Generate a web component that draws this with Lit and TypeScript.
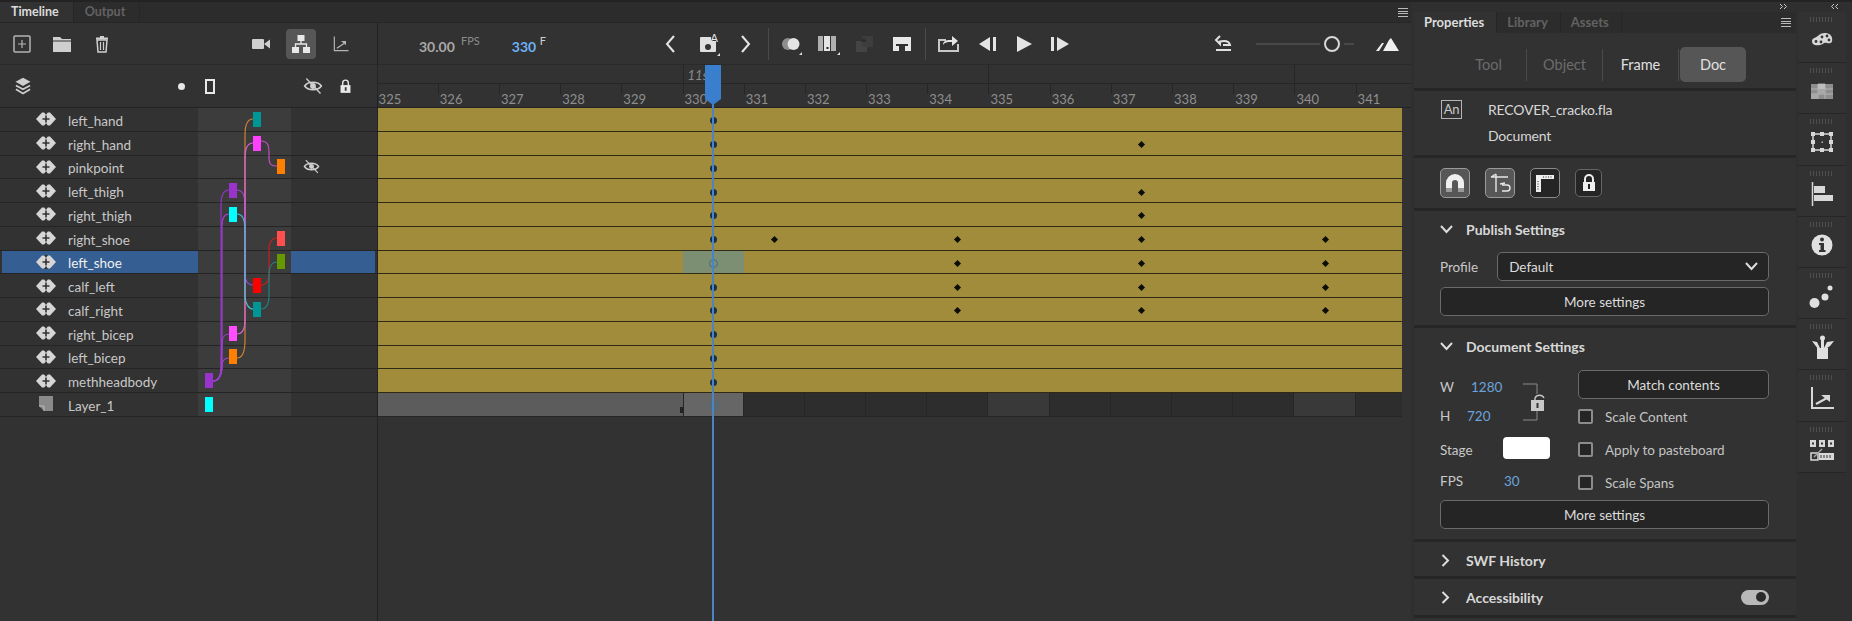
import { LitElement, html, css, svg } from 'lit';
import { customElement } from 'lit/decorators.js';

interface Layer {
  name: string;
  depth: number;
  color: string;
  keys: number[];
}

const FRAME_COUNT = 17;
const FIRST_FRAME = 325;

const layers: Layer[] = [
  { name: 'left_hand', depth: 2, color: '#009696', keys: [] },
  { name: 'right_hand', depth: 2, color: '#ff40ff', keys: [337] },
  { name: 'pinkpoint', depth: 3, color: '#ff8000', keys: [] },
  { name: 'left_thigh', depth: 1, color: '#9933cc', keys: [337] },
  { name: 'right_thigh', depth: 1, color: '#00ffff', keys: [337] },
  { name: 'right_shoe', depth: 3, color: '#ff4f4f', keys: [331, 334, 337, 340] },
  { name: 'left_shoe', depth: 3, color: '#669900', keys: [334, 337, 340] },
  { name: 'calf_left', depth: 2, color: '#ff0000', keys: [334, 337, 340] },
  { name: 'calf_right', depth: 2, color: '#009696', keys: [334, 337, 340] },
  { name: 'right_bicep', depth: 1, color: '#ff4dff', keys: [] },
  { name: 'left_bicep', depth: 1, color: '#ff8000', keys: [] },
  { name: 'methheadbody', depth: 0, color: '#9933cc', keys: [] },
  { name: 'Layer_1', depth: 0, color: '#00ffff', keys: [] },
];

const links = [
  ['M253 119C247 119 245 125 245 135L245 340C245 352 243 358 237 358', '#d08030'],
  ['M237 190C243 190 245 196 245 205L245 275C245 282 249 285 253 285', '#a040d0'],
  ['M253 143C247 143 245 149 245 158L245 320C245 328 243 334 237 334', '#e060e0'],
  ['M261 141C268 141 269 146 269 152L269 158C269 165 272 166 277 166', '#c050c0'],
  ['M229 190C223 190 221 196 221 205L221 365C221 376 219 381 213 381', '#9933cc'],
  ['M229 214C225 214 222 218 222 226L222 365C222 376 219 381 213 381', '#a040d0'],
  ['M237 214C243 214 245 220 245 230L245 295C245 304 249 309 253 309', '#40c0d8'],
  ['M229 334C224 334 222 337 222 345L221 370C221 376 218 381 213 381', '#a040d0'],
  ['M229 358C224 358 222 361 222 366C222 376 218 381 213 381', '#a040d0'],
  ['M261 285C267 285 269 281 269 273L269 250C269 242 272 238 277 238', '#c02020'],
  ['M261 309C267 309 269 304 269 295L269 275C269 266 272 262 277 262', '#208080'],
];

const L = '#cfcfcf';

// every toolbar icon is drawn on a 24x24 box
const icons: Record<string, unknown> = {
  add: svg`<rect x="4" y="4" width="16" height="16" rx="1" fill="none" stroke="#b4b4b4" stroke-width="1.5"/><path d="M12 8v8M8 12h8" stroke="#b4b4b4" stroke-width="1.2"/>`,
  folder: svg`<path d="M3 5h7l2 2h9v13H3z" fill="${L}"/><path d="M3 9h18" stroke="#323232"/>`,
  trash: svg`<path d="M6 6.5h12M10 5h4" stroke="${L}" stroke-width="2"/><path d="M7 8h10l-1 12H8z" fill="none" stroke="${L}" stroke-width="1.5"/><path d="M10.5 10v8M13.5 10v8" stroke="${L}" stroke-width="1.2"/>`,
  camera: svg`<rect x="3" y="7" width="12" height="10" rx="1" fill="${L}"/><path d="M15 12l6-4.5v9z" fill="${L}"/>`,
  parent: svg`<rect x="8.5" y="3" width="7" height="6" fill="#e8e8e8"/><rect x="3" y="15" width="7" height="6" fill="#e8e8e8"/><rect x="14" y="15" width="7" height="6" fill="#e8e8e8"/><path d="M12 9v3M6.5 15v-3h11v3" fill="none" stroke="#e8e8e8" stroke-width="1.3"/>`,
  graph: svg`<path d="M4 3v17h17" fill="none" stroke="#b4b4b4" stroke-width="1.4"/><path d="M7 17l9-6" stroke="#b4b4b4" stroke-width="1.4"/><path d="M12 8.500h6v5z" fill="#b4b4b4"/>`,
  stack: svg`<path d="M12 2l9 5-9 5-9-5z" fill="${L}"/><path d="M3.500 11.500l8.500 4.500 8.500-4.500M3.500 16l8.500 5 8.500-5" fill="none" stroke="${L}" stroke-width="2"/>`,
  eye: svg`<path d="M2 12c4-6 16-6 20 0-4 6-16 6-20 0z" fill="none" stroke="${L}" stroke-width="2"/><circle cx="12" cy="12" r="3.500" fill="${L}"/><path d="M4 3l17 18" stroke="${L}" stroke-width="1.600"/>`,
  lock: svg`<path d="M8 10V7a4 4 0 018 0v3" fill="none" stroke="#e8e8e8" stroke-width="2"/><rect x="5" y="10" width="14" height="11" fill="#e8e8e8"/><rect x="11" y="13" width="2.500" height="5" fill="#323232"/>`,
  prev: svg`<path d="M15 4l-7 8 7 8" fill="none" stroke="#e6e6e6" stroke-width="2"/>`,
  next: svg`<path d="M9 4l7 8-7 8" fill="none" stroke="#e6e6e6" stroke-width="2"/>`,
  keyframe: svg`<rect x="4" y="5" width="16" height="15" rx="1" fill="#e0e0e0"/><circle cx="12" cy="15" r="3" fill="#323232"/><path d="M15 2h7v7h-7z" fill="#323232"/><text x="14.500" y="9.500" font-size="11" fill="#e8e8e8" font-family="Lato, sans-serif">A</text><path d="M24 21v3h-3z" fill="#ddd"/>`,
  onion: svg`<circle cx="9" cy="12" r="6" fill="#8d8d8d"/><circle cx="14.500" cy="12" r="6" fill="#e4e4e4"/><path d="M23 20v3h-3z" fill="#ddd"/>`,
  frames: svg`<rect x="2" y="4" width="5" height="15" fill="#b0b0b0"/><rect x="8" y="4" width="6" height="15" fill="#e4e4e4"/><rect x="15" y="4" width="5" height="15" fill="#b0b0b0"/><rect x="10.500" y="15" width="2" height="2" fill="#222"/><path d="M24 20v3h-3z" fill="#ddd"/>`,
  paste: svg`<rect x="3" y="9" width="11" height="11" fill="#444"/><rect x="9" y="4" width="11" height="11" fill="#3d3d3d"/><path d="M8 9l5 0M13 9l-3-2" stroke="#2b2b2b" stroke-width="1.300"/>`,
  clip: svg`<path d="M3 5h18v14H15v-5h3v-2H6v2h3v5H3z" fill="#e8e8e8"/>`,
  loop: svg`<path d="M10 8H3v11h19v-7" fill="none" stroke="#c8c8c8" stroke-width="2"/><path d="M7 13c0-4 3-5 7-5h2V4l6 5-6 5v-4h-2c-2 0-5 0-7 3z" fill="#e4e4e4"/>`,
  back: svg`<path d="M14 5v14L3 12z" fill="#e4e4e4"/><rect x="17" y="5" width="3" height="14" fill="#e4e4e4"/>`,
  play: svg`<path d="M5 4l15 8-15 8z" fill="#e4e4e4"/>`,
  step: svg`<rect x="3" y="5" width="3" height="14" fill="#e4e4e4"/><path d="M9 5v14l12-7z" fill="#e4e4e4"/>`,
  undo: svg`<path d="M8 4L4 8l4 4V9.500c5-1 9-1 10 3.500H11" fill="none" stroke="#e0e0e0" stroke-width="2"/><path d="M4 18h15" stroke="#e0e0e0" stroke-width="2"/>`,
  peaks: svg`<path d="M8 19l6-11 2-2 8 13z" fill="#f0f0f0"/><path d="M1 19l6-8h2l-5 8z" fill="#f0f0f0"/>`,
};

const dockIcons = [
  svg`<path d="M3 14c0-3 4-3 7-6 3-3 12-3 13 3 1 5-2 6-5 5-3-1-3 1-7 2-4 1-8 0-8-4z" fill="#d8d8d8"/><circle cx="7" cy="14.500" r="1.400" fill="#333"/><circle cx="12" cy="15" r="1.400" fill="#333"/><circle cx="13" cy="10" r="1.400" fill="#333"/><circle cx="18" cy="9" r="1.400" fill="#333"/><circle cx="20" cy="13" r="1.400" fill="#333"/>`,
  svg`<rect x="2" y="6" width="22" height="15" fill="#8e8e8e"/><path d="M2 11h7V6h7v5h8M2 16h22M9 11v10M16 11v10" fill="none" stroke="#bdbdbd" stroke-width="0.8"/><rect x="9" y="6" width="7" height="5" fill="#bdbdbd"/><rect x="9" y="11" width="7" height="5" fill="#a8a8a8"/><rect x="2" y="16" width="7" height="5" fill="#a8a8a8"/>`,
  svg`<rect x="4" y="5" width="18" height="16" fill="none" stroke="#d8d8d8" stroke-width="1.500"/><path d="M2 3h4v4H2zM11 3h4v4h-4zM20 3h4v4h-4zM2 11h4v4H2zM20 11h4v4h-4zM2 19h4v4H2zM11 19h4v4h-4zM20 19h4v4h-4z" fill="#d8d8d8"/><rect x="12.500" y="12.500" width="1.500" height="1.500" fill="#bbb"/>`,
  svg`<path d="M3.500 1v24" stroke="#d8d8d8" stroke-width="1.500"/><rect x="5" y="5" width="11" height="7" fill="#d8d8d8"/><rect x="5" y="14" width="19" height="6" fill="#d8d8d8"/>`,
  svg`<circle cx="13" cy="13" r="10.500" fill="#e0e0e0"/><circle cx="13" cy="7.500" r="2" fill="#333"/><path d="M10 11h5v7h1.500v2h-6.500v-2h1.500v-5h-1.500z" fill="#333"/>`,
  svg`<circle cx="5.500" cy="20" r="5" fill="#e0e0e0"/><circle cx="16" cy="14" r="3.500" fill="#e0e0e0"/><circle cx="21" cy="5" r="2.500" fill="#e0e0e0"/>`,
  svg`<path d="M8 14h11v11H8z" fill="#e0e0e0"/><path d="M9 15L3 7l5 1 3 6zM12 14V3h3v11zM15 14l3-6 7-1-4 5-3 2z" fill="#e0e0e0"/><circle cx="13.500" cy="4" r="2.500" fill="#e0e0e0"/>`,
  svg`<path d="M3 2v21h22" fill="none" stroke="#d8d8d8" stroke-width="2"/><path d="M7 19l11-6" stroke="#d8d8d8" stroke-width="2"/><path d="M12 10h9v7z" fill="#d8d8d8"/>`,
  svg`<path d="M1 3h6v7H1zM10 3h6v7h-6zM19 3h6v7h-6z" fill="#d8d8d8"/><path d="M4 5.500v2M13 5.500v2M22 5.500v2" stroke="#333" stroke-width="2"/><rect x="2" y="16" width="7" height="7" fill="none" stroke="#d8d8d8" stroke-width="1.500"/><path d="M10 16h15v7H10z" fill="#d8d8d8"/><path d="M12 18v3M15 18v3M18 18v3M21 18v3" stroke="#333"/><path d="M5 20l8-8" stroke="#aaa" stroke-width="1.300"/>`,
];

function icon(name: string, size = 24) {
  return html`<svg width=${size} height=${size} viewBox="0 0 24 24">${icons[name]}</svg>`;
}

@customElement('app-root')
export class AppRoot extends LitElement {
  static styles = css`
    :host {
      display: flex;
      position: relative;
      width: 1852px;
      height: 621px;
      overflow: hidden;
      background: #2f2f2f;
      color: #c8c8c8;
      font-family: Lato, 'Noto Sans', sans-serif;
      font-size: 13.5px;
      box-sizing: border-box;
      border-top: 2px solid #232323;
    }

    svg { display: block; flex: none; }

    /* timeline */
    .timeline {
      width: 1411px;
      flex: none;
      display: flex;
      flex-direction: column;
      background: #323232;
      overflow: hidden;
    }
    .tabs {
      height: 21px;
      flex: none;
      display: flex;
      background: #2c2c2c;
      border-bottom: 1px solid #262626;
      box-sizing: border-box;
      font-size: 12.5px;
      font-weight: 700;
      align-items: stretch;
    }
    .tab {
      display: flex;
      align-items: center;
      padding: 0 14px 2px 11px;
      color: #626262;
      border-right: 1px solid #262626;
    }
    .tab.on { color: #dcdcdc; background: #323232; }
    .tabs .menu { margin-left: auto; margin-right: 3px; align-self: center; }

    .body { flex: 1; display: flex; min-height: 0; }
    .left {
      width: 378px;
      flex: none;
      box-sizing: border-box;
      border-right: 1px solid #222;
      display: flex;
      flex-direction: column;
    }
    .right { flex: 1; min-width: 0; position: relative; display: flex; flex-direction: column; }

    .tools {
      height: 42px;
      box-sizing: border-box;
      flex: none;
      display: flex;
      align-items: center;
      gap: 10px;
      padding: 0 21px 0 7px;
      border-bottom: 1px solid #2a2a2a;
    }
    .btn {
      width: 30px;
      height: 30px;
      flex: none;
      display: flex;
      align-items: center;
      justify-content: center;
      border-radius: 4px;
    }
    .btn.on { background: #565656; }
    .push { margin-left: auto; }

    .header {
      height: 43px;
      box-sizing: border-box;
      flex: none;
      display: flex;
      align-items: center;
      padding-left: 13px;
      border-bottom: 1px solid #222;
    }
    .dot { width: 7px; height: 7px; border-radius: 50%; background: #e8e8e8; margin-left: 144.5px; }
    .frame-mark { width: 10px; height: 15px; box-sizing: border-box; border: 2px solid #e8e8e8; margin-left: 20px; }
    .header .eye { margin-left: 88px; }
    .header .lock { margin-left: 14.5px; }

    .list { position: relative; flex: none; }
    .row {
      height: 23.75px;
      box-sizing: border-box;
      display: flex;
      border-bottom: 1px solid #242424;
      padding-left: 2px;
    }
    .row .name {
      width: 196px;
      flex: none;
      display: flex;
      align-items: center;
      padding-left: 34px;
      box-sizing: border-box;
      gap: 12px;
    }
    .row .name span { padding-top: 3px; }
    .row .col {
      width: 93px;
      flex: none;
      background: #3c3c3c;
      box-sizing: border-box;
      display: flex;
      align-items: center;
    }
    .row .chip { width: 8px; height: 15px; position: relative; z-index: 3; }
    .row .vis { flex: 1; display: flex; align-items: center; padding-left: 12px; margin-right: 2px; }
    .row.sel .name, .row.sel .vis { background: #355f92; color: #f0f0f0; }
    .links { position: absolute; left: 0; top: 0; z-index: 2; pointer-events: none; }

    .fps { color: #a8a8a8; font-size: 14px; font-weight: 700; width: 36px; margin: 6px 0 0 41px; }
    .unit { font-size: 11px; color: #8c8c8c; align-self: flex-start; margin: 11px 0 0 6px; }
    .cur { margin: 6px 0 0 32px; color: #6cb0f4; font-size: 14px; font-weight: 700; width: 25px; }
    .unit.f { color: #d0d0d0; margin-left: 3px; }
    .transport { padding: 0; gap: 0; }
    .transport .btn { margin-left: 7px; }
    .transport .nav { margin-left: 110px; }
    .transport .btn.back { margin-left: 10px; }
    .transport .btn.tight { margin-left: 6px; }
    .transport .btn.push { margin-left: auto; }
    .transport .btn.end { margin: 0 9px 0 18px; }
    .sep { width: 1px; height: 32px; background: #4a4a4a; flex: none; margin-left: 8px; }
    .slider { width: 98px; height: 2px; background: #484848; position: relative; margin-left: 17px; flex: none; }
    .knob {
      position: absolute;
      left: 68px;
      top: -7px;
      width: 16px;
      height: 16px;
      box-sizing: border-box;
      border: 2.5px solid #d8d8d8;
      border-radius: 50%;
      background: #323232;
      box-shadow: 0 0 0 4px #323232;
    }

    .secs {
      height: 19px;
      flex: none;
      border-bottom: 1px solid #262626;
      display: grid;
      grid-template-columns: repeat(17, 61.2px);
      margin-left: -1.4px;
      box-sizing: border-box;
    }
    .secs span { font-style: italic; color: #8a8a8a; font-size: 13px; padding: 2px 0 0 4px; }
    .secs span.mark { border-left: 1px solid #262626; }
    .ruler {
      height: 24px;
      flex: none;
      display: grid;
      grid-template-columns: repeat(17, 61.2px);
      margin-left: -1.4px;
      border-bottom: 1px solid #222;
      box-sizing: border-box;
    }
    .ruler span {
      font-size: 13px;
      color: #8e8e8e;
      padding: 7px 0 0 2px;
      background: linear-gradient(#262626, #262626) left top / 1px 10px no-repeat;
    }
    .tracks { width: 1024px; overflow: hidden; flex: none; }
    .track {
      height: 23.75px;
      box-sizing: border-box;
      display: grid;
      grid-template-columns: repeat(17, 61.2px);
      margin-left: -1.4px;
      width: 1026px;
      background: #a08c3a;
      border-bottom: 1px solid #2e2a16;
    }
    .cell { display: flex; align-items: center; justify-content: center; padding-top: 3px; box-sizing: border-box; }
    .cell.sel { background: #7d8f72; }
    .key {
      width: 7px;
      height: 7px;
      border-radius: 50%;
      background: #16304e;
    }
    .key.open { background: none; border: 1px solid #3a6d96; }
    .diamond { width: 5px; height: 5px; background: #0c0c08; transform: rotate(45deg); }
    .track.plain { background: #2d2d2d; border-bottom-color: #262626; }
    .track.plain .cell { border-right: 1px solid #262626; }
    .track.plain .cell.filled { background: #5c5c5c; border-right: none; }
    .track.plain .cell.cur5 { background: #393939; }
    .track.plain .cell.sel { background: #666; border-left: 1px solid #262626; }
    .stop { width: 3px; height: 6px; background: #222; margin: 8px 0 0 auto; }

    .playhead { position: absolute; left: 334px; top: 42px; bottom: 0; width: 2px; background: #4b84c2; z-index: 5; }
    .playhead::before {
      content: '';
      position: absolute;
      left: -7px;
      top: 0;
      width: 16px;
      height: 40px;
      background: #3a7fce;
      clip-path: polygon(0 0, 100% 0, 100% 85%, 50% 100%, 0 85%);
    }

    /* properties */
    .props {
      width: 382px;
      flex: none;
      margin: 10px 0 0 3px;
      display: flex;
      flex-direction: column;
      background: #323232;
      overflow: hidden;
    }
    .ptabs { height: 21px; flex: none; display: flex; font-size: 13px; font-weight: 700; background: #2c2c2c; }
    .ptabs .tab { padding: 0 12px 2px 10px; }
    .ptabs .menu { margin: 6px 5px 0 auto; }
    .menu { width: 10px; height: 7px; flex: none; border-top: 1px solid #bbb; border-bottom: 1px solid #bbb; position: relative; }
    .menu::after { content: ''; position: absolute; left: 0; right: 0; top: 2px; height: 1px; background: #bbb; box-shadow: 0 2px 0 #bbb; }

    .seg {
      height: 58px;
      flex: none;
      box-sizing: border-box;
      display: flex;
      align-items: center;
      justify-content: flex-end;
      padding: 8px 50px 0 0;
      font-size: 14.5px;
      border-bottom: 3px solid #262626;
    }
    .seg span {
      width: 75px;
      height: 32px;
      display: flex;
      align-items: center;
      justify-content: center;
      border-right: 1px solid #4a4a4a;
      color: #e0e0e0;
    }
    .seg span.dim { color: #6c6c6c; }
    .seg span.on {
      width: 66px;
      height: 35px;
      border: none;
      background: #565656;
      border-radius: 5px;
      margin-left: 1px;
    }
    .docinfo {
      height: 67px;
      flex: none;
      box-sizing: border-box;
      display: flex;
      padding: 9px 0 0 27px;
      border-bottom: 3px solid #262626;
      font-size: 14px;
      letter-spacing: -0.2px;
    }
    .an {
      width: 19px;
      height: 17px;
      border: 1.5px solid #b4b4b4;
      font-size: 13px;
      line-height: 16px;
      text-align: center;
      flex: none;
    }
    .docinfo .txt { margin-left: 26px; display: flex; flex-direction: column; gap: 9px; color: #d8d8d8; margin-top: 1px; }
    .snap {
      height: 53px;
      flex: none;
      box-sizing: border-box;
      display: flex;
      align-items: center;
      gap: 15px;
      padding-left: 26px;
      border-bottom: 3px solid #262626;
    }
    .snap div {
      width: 30px;
      height: 30px;
      box-sizing: border-box;
      flex: none;
      border: 1px solid #8a8a8a;
      border-radius: 5px;
      display: flex;
      align-items: center;
      justify-content: center;
      background: #252525;
    }
    .snap div.on { background: #575757; border-color: #9a9a9a; }
    .snap div.small { width: 27px; height: 28px; border-color: #666; }

    .section { flex: none; box-sizing: border-box; border-bottom: 3px solid #262626; padding: 0 27px 0 26px; }
    .sec-head { display: flex; align-items: center; height: 36px; gap: 13px; font-weight: 700; font-size: 14px; color: #d8d8d8; }
    .sec-head .pill { margin-left: auto; }
    .rowline { display: flex; align-items: center; gap: 19px; margin: 5px 0 6px; }
    .select {
      flex: 1;
      height: 29px;
      box-sizing: border-box;
      border: 1px solid #6a6a6a;
      border-radius: 5px;
      background: #252525;
      display: flex;
      align-items: center;
      padding: 0 10px 0 11px;
      justify-content: space-between;
      color: #dcdcdc;
    }
    .wide {
      height: 29px;
      box-sizing: border-box;
      border: 1px solid #6a6a6a;
      border-radius: 5px;
      background: #252525;
      display: flex;
      align-items: center;
      justify-content: center;
      color: #dcdcdc;
    }
    .docgrid { display: grid; grid-template-columns: 138px 1fr; margin-top: 6px; }
    .dl { display: grid; grid-template-columns: 27px 1fr; position: relative; align-content: start; }
    .dl > div { height: 29px; display: flex; align-items: center; }
    .dl > .w { margin-top: 2px; }
    .dl > .tall { height: 36px; }
    .stage { padding-top: 4px; box-sizing: border-box; }
    .blue { color: #6ca3dc; }
    .pad-w { padding-left: 4px; }
    .pad-fps { padding-left: 37px; }
    .dr { display: flex; flex-direction: column; }
    .dr .wide { margin-bottom: 1px; }
    .check { display: flex; align-items: center; gap: 12px; height: 33px; color: #c4c4c4; }
    .box { width: 15px; height: 15px; box-sizing: border-box; border: 2px solid #8c8c8c; border-radius: 2px; background: #252525; flex: none; }
    .link-lock { position: absolute; left: 83px; top: 13px; }
    .swatch { width: 47px; height: 22px; border-radius: 4px; background: #fff; margin-left: 36px; }
    .more { margin-top: 1px; }
    .pill { width: 28px; height: 15px; background: #b8b8b8; border-radius: 8px; position: relative; flex: none; }
    .pill::after { content: ''; position: absolute; right: 3px; top: 2.5px; width: 10px; height: 10px; border-radius: 50%; background: #2a2a2a; }

    /* dock on the far right */
    .dockwrap { margin: 10px 6px 0 2px; width: 48px; flex: none; }
    .dock { height: 50.2px; border-bottom: 1px solid #262626; background: #323232; display: flex; flex-direction: column; align-items: center; }
    .grip {
      width: 24px;
      height: 5px;
      margin-top: 5px;
      background: repeating-linear-gradient(90deg, #4f4f4f 0 1px, transparent 1px 3px);
    }
    .dock svg { margin-top: 5px; }
    .corner { position: absolute; top: 1px; }
  `;

  private renderTrack(l: Layer) {
    const sel = l.name === 'left_shoe';
    return html`<div class="track">
      ${Array.from({ length: FRAME_COUNT }, (_, n) => {
        const f = FIRST_FRAME + n;
        return html`<div class="cell ${sel && f === 330 ? 'sel' : ''}">
          ${f === 330
            ? html`<div class="key ${sel ? 'open' : ''}"></div>`
            : l.keys.includes(f)
              ? html`<div class="diamond"></div>`
              : ''}
        </div>`;
      })}
    </div>`;
  }

  private renderEmptyTrack() {
    return html`<div class="track plain">
      ${Array.from({ length: FRAME_COUNT }, (_, n) => {
        const f = FIRST_FRAME + n;
        if (f < 329) return html`<div class="cell filled"></div>`;
        if (f === 329) return html`<div class="cell filled"><div class="stop"></div></div>`;
        if (f === 330) return html`<div class="cell sel"><div class="key open"></div></div>`;
        return html`<div class="cell ${f === 335 || f === 340 ? 'cur5' : ''}"></div>`;
      })}
    </div>`;
  }

  render() {
    const chevronDown = html`<svg width="13" height="9" viewBox="0 0 13 9"><path d="M1 1l5.500 6L12 1" fill="none" stroke="#ddd" stroke-width="2"/></svg>`;
    const chevronRight = html`<svg width="13" height="13" viewBox="0 0 13 13"><path d="M2.500 1L8 6.500 2.500 12" fill="none" stroke="#ddd" stroke-width="2"/></svg>`;
    return html`
      <section class="timeline">
        <div class="tabs">
          <div class="tab on">Timeline</div>
          <div class="tab">Output</div>
          <div class="menu"></div>
        </div>
        <div class="body">
          <div class="left">
            <div class="tools">
              <div class="btn">${icon('add')}</div>
              <div class="btn">${icon('folder')}</div>
              <div class="btn">${icon('trash')}</div>
              <div class="btn push">${icon('camera')}</div>
              <div class="btn on">${icon('parent')}</div>
              <div class="btn">${icon('graph', 20)}</div>
            </div>
            <div class="header">
              ${icon('stack', 20)}
              <div class="dot"></div>
              <div class="frame-mark"></div>
              <div class="eye">${icon('eye', 20)}</div>
              <div class="lock">${icon('lock', 17)}</div>
            </div>
            <div class="list">
              ${layers.map(
                (l) => html`<div class="row ${l.name === 'left_shoe' ? 'sel' : ''}">
                  <div class="name">
                    ${l.name === 'Layer_1'
                      ? html`<svg width="20" height="18" viewBox="0 0 20 18"><path d="M3 1h14v15H8l-5-5z" fill="#8a8a8a"/><path d="M3 11h5v5" fill="none" stroke="#bbb"/></svg>`
                      : html`<svg width="20" height="14" viewBox="0 0 20 14"><path d="M0 7l6-6.500h8L20 7l-6 6.500H6z" fill="#d6d6d6"/><path d="M8 0h4l-2 3zM8 14h4l-2-3z" fill="#323232"/><path d="M10 3.500v7M6.500 7h7" stroke="#323232" stroke-width="1.600"/></svg>`}
                    <span>${l.name}</span>
                  </div>
                  <div class="col">
                    <div class="chip" style="margin-left:${7 + l.depth * 24}px;background:${l.color}"></div>
                  </div>
                  <div class="vis">${l.name === 'pinkpoint' ? icon('eye', 17) : ''}</div>
                </div>`,
              )}
              <svg class="links" width="377" height="320" viewBox="0 108 377 320" fill="none" stroke-width="1.200">
                ${links.map(([d, c]) => svg`<path d=${d} stroke=${c}/>`)}
              </svg>
            </div>
          </div>
          <div class="right">
            <div class="tools transport">
              <span class="fps">30.00</span>
              <span class="unit">FPS</span>
              <span class="cur">330</span>
              <span class="unit f">F</span>
              <div class="btn nav">${icon('prev')}</div>
              <div class="btn">${icon('keyframe')}</div>
              <div class="btn">${icon('next')}</div>
              <div class="sep"></div>
              <div class="btn">${icon('onion')}</div>
              <div class="btn">${icon('frames')}</div>
              <div class="btn">${icon('paste')}</div>
              <div class="btn">${icon('clip')}</div>
              <div class="sep"></div>
              <div class="btn">${icon('loop')}</div>
              <div class="btn back">${icon('back')}</div>
              <div class="btn tight">${icon('play')}</div>
              <div class="btn tight">${icon('step')}</div>
              <div class="btn push">${icon('undo')}</div>
              <div class="slider"><div class="knob"></div></div>
              <div class="btn end">${icon('peaks')}</div>
            </div>
            <div class="secs">
              ${Array.from({ length: FRAME_COUNT }, (_, n) => {
                const f = FIRST_FRAME + n;
                return html`<span class=${f % 5 === 0 ? 'mark' : ''}>${f === 330 ? '11s' : ''}</span>`;
              })}
            </div>
            <div class="ruler">
              ${Array.from({ length: FRAME_COUNT }, (_, n) => html`<span>${FIRST_FRAME + n}</span>`)}
            </div>
            <div class="tracks">
              ${layers.slice(0, -1).map((l) => this.renderTrack(l))}
              ${this.renderEmptyTrack()}
            </div>
            <div class="playhead"></div>
          </div>
        </div>
      </section>

      <section class="props">
        <div class="ptabs">
          <div class="tab on">Properties</div>
          <div class="tab">Library</div>
          <div class="tab">Assets</div>
          <div class="menu"></div>
        </div>
        <div class="seg">
          <span class="dim">Tool</span>
          <span class="dim">Object</span>
          <span>Frame</span>
          <span class="on">Doc</span>
        </div>
        <div class="docinfo">
          <div class="an">An</div>
          <div class="txt"><span>RECOVER_cracko.fla</span><span>Document</span></div>
        </div>
        <div class="snap">
          <div class="on">
            <svg width="20" height="20" viewBox="0 0 20 20"><path d="M1 19v-9a9 9 0 0118 0v9h-6v-9a3 3 0 00-6 0v9z" fill="#f0f0f0"/><path d="M1 15h6v4H1zM13 15h6v4h-6z" fill="#9a9a9a"/></svg>
          </div>
          <div class="on">
            <svg width="22" height="22" viewBox="0 0 22 22" fill="none" stroke="#e8e8e8" stroke-width="1.400"><path d="M7 2v18M2 5h17M2 5l5-3M13 13h5a3 3 0 010 6h-5M11 12l5-1"/></svg>
          </div>
          <div>
            <svg width="20" height="20" viewBox="0 0 20 20"><path d="M1 2h18v4H6v13H1z" fill="#eee"/><path d="M8 4h9M3 8v9" stroke="#222" stroke-dasharray="1 1.500"/></svg>
          </div>
          <div class="small">
            <svg width="16" height="18" viewBox="0 0 16 18"><path d="M4 8V5a4 4 0 018 0v3" fill="none" stroke="#eee" stroke-width="2"/><rect x="2" y="8" width="12" height="9" fill="#eee"/><rect x="7" y="10" width="2" height="5" fill="#222"/></svg>
          </div>
        </div>
        <div class="section" style="height:117px">
          <div class="sec-head">${chevronDown}<span>Publish Settings</span></div>
          <div class="rowline">
            <span>Profile</span>
            <div class="select">
              <span>Default</span>
              ${chevronDown}
            </div>
          </div>
          <div class="wide">More settings</div>
        </div>
        <div class="section" style="height:214px">
          <div class="sec-head">${chevronDown}<span>Document Settings</span></div>
          <div class="docgrid">
            <div class="dl">
              <div class="w">W</div><div class="w blue pad-w">1280</div>
              <div>H</div><div class="blue">720</div>
              <div class="tall stage">Stage</div>
              <div class="tall"><span class="swatch"></span></div>
              <div>FPS</div><div class="blue pad-fps">30</div>
              <svg class="link-lock" width="24" height="38" viewBox="0 0 24 38" fill="none">
                <path d="M0 1h14v10M14 27v10H0" stroke="#8a8a8a"/>
                <path d="M12 18v-3a5 5 0 019 0" stroke="#c8c8c8" stroke-width="1.400"/>
                <rect x="8" y="17" width="13" height="11" fill="#c8c8c8"/><rect x="13.500" y="20" width="2" height="5" fill="#333"/>
              </svg>
            </div>
            <div class="dr">
              <div class="wide">Match contents</div>
              <div class="check"><span class="box"></span>Scale Content</div>
              <div class="check"><span class="box"></span>Apply to pasteboard</div>
              <div class="check"><span class="box"></span>Scale Spans</div>
            </div>
          </div>
          <div class="wide more">More settings</div>
        </div>
        <div class="section" style="height:37px">
          <div class="sec-head">${chevronRight}<span>SWF History</span></div>
        </div>
        <div class="section" style="height:39px">
          <div class="sec-head">${chevronRight}<span>Accessibility</span><span class="pill"></span></div>
        </div>
      </section>

      <div class="dockwrap">
        ${dockIcons.map(
          (d) => html`<div class="dock">
            <div class="grip"></div>
            <svg width="26" height="26" viewBox="0 0 26 26">${d}</svg>
          </div>`,
        )}
      </div>
      <svg class="corner" style="left:1779px" width="10" height="7" viewBox="0 0 10 7" fill="none" stroke="#c8c8c8"><path d="M1 1l2.500 2.500L1 6M5 1l2.500 2.500L5 6"/></svg>
      <svg class="corner" style="left:1830px" width="10" height="7" viewBox="0 0 10 7" fill="none" stroke="#c8c8c8"><path d="M4 1L1.500 3.500 4 6M8 1L5.500 3.500 8 6"/></svg>
    `;
  }
}
